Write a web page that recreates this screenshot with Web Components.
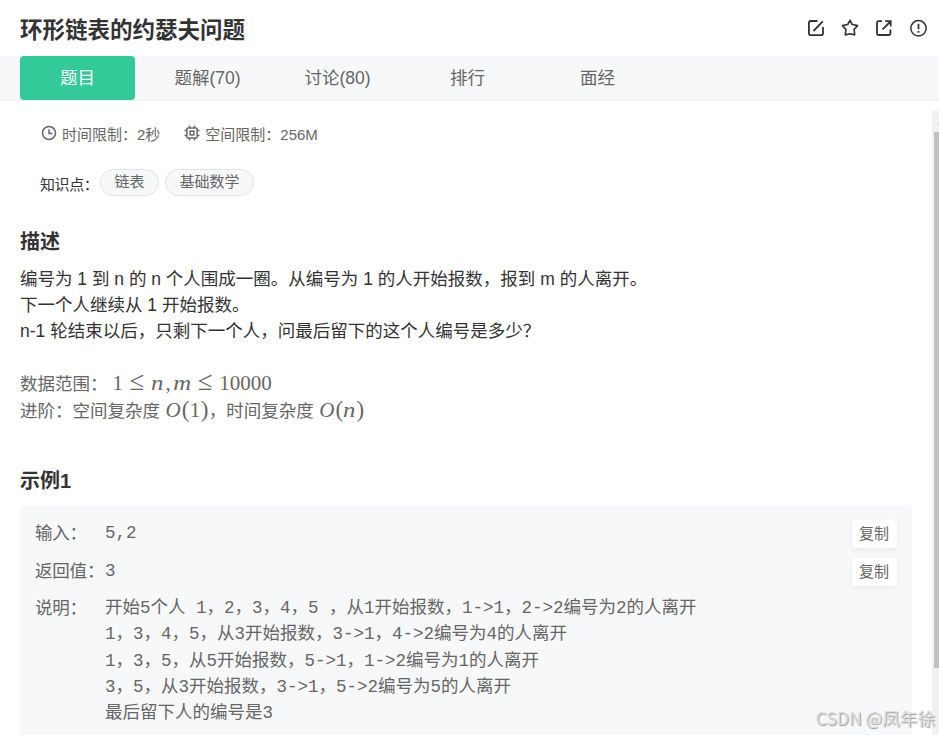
<!DOCTYPE html>
<html lang="zh-CN">
<head>
    <meta charset="UTF-8">
    <meta name="viewport" content="width=device-width, initial-scale=1.0">
    <title>环形链表的约瑟夫问题</title>
    <style>
        body {
            margin: 0;
            background: #fff;
            color: #666;
            font: 17.5px/26.25px "Liberation Sans", "Noto Sans CJK SC", sans-serif;
            overflow: hidden;
        }
    </style>
</head>
<body>
    <problem-page>
        <problem-header slot="header">环形链表的约瑟夫问题</problem-header>
        <tab-bar slot="tabs">
            <tab-item active>题目</tab-item>
            <tab-item>题解(70)</tab-item>
            <tab-item>讨论(80)</tab-item>
            <tab-item>排行</tab-item>
            <tab-item>面经</tab-item>
        </tab-bar>
        <limit-info></limit-info>
        <tag-list label="知识点：">
            <tag-pill>链表</tag-pill>
            <tag-pill>基础数学</tag-pill>
        </tag-list>
        <problem-description heading="描述"></problem-description>
        <example-box heading="示例1">
            <example-row label="输入：" copy>5,2</example-row>
            <example-row label="返回值：" copy>3</example-row>
            <example-row label="说明：">开始5个人 1，2，3，4，5 ，从1开始报数，1-&gt;1，2-&gt;2编号为2的人离开
1，3，4，5，从3开始报数，3-&gt;1，4-&gt;2编号为4的人离开
1，3，5，从5开始报数，5-&gt;1，1-&gt;2编号为1的人离开
3，5，从3开始报数，3-&gt;1，5-&gt;2编号为5的人离开
最后留下人的编号是3</example-row>
        </example-box>
        <water-mark slot="overlay">CSDN @凤年徐</water-mark>
    </problem-page>

    <script>
        // Small helper: registers an element with an open shadow root
        function define(name, render) {
            customElements.define(name, class extends HTMLElement {
                constructor() {
                    super();
                    this.attachShadow({mode: 'open'}).innerHTML = render(this);
                }
            });
        }

        define('problem-page', () => `
            <style>
                :host { display: flex; flex-direction: column; position: relative; width: 939px; height: 735px; overflow: hidden; }
                .body { display: flex; flex: 1; min-height: 0; margin-top: 10px; }
                main { flex: 1; min-width: 0; overflow: hidden; padding: 0 20px; }
            </style>
            <slot name="header"></slot>
            <slot name="tabs"></slot>
            <div class="body">
                <main><slot></slot></main>
                <scroll-bar></scroll-bar>
            </div>
            <slot name="overlay"></slot>
        `);

        define('problem-header', () => `
            <style>
                :host { display: flex; justify-content: space-between; align-items: center; height: 56px; box-sizing: border-box; padding: 2px 11px 0 20px; }
                h1 { margin: 3px 0 0; font-size: 22.5px; line-height: 34px; color: #333; font-weight: bold; }
                .icons { display: flex; gap: 14px; }
                svg { width: 20px; height: 20px; fill: none; stroke: #333; stroke-width: 1.8; margin-top: -2px; }
            </style>
            <h1><slot></slot></h1>
            <div class="icons">
                <svg viewBox="0 0 20 20"><path d="M11.5 3H4.8Q2.9 3 2.9 4.9V15.2Q2.9 17.1 4.8 17.1H15.1Q17 17.1 17 15.2V9M7.5 13 16.8 3.4"/></svg>
                <svg viewBox="0 0 20 20"><path stroke-width="1.6" stroke-linejoin="round" d="M10 2.3 12.3 6.5 17.6 7.6 14.1 11.4 14.7 16.9 10 15.8 5.3 16.9 5.9 11.4 2.4 7.6 7.7 6.5Z"/></svg>
                <svg viewBox="0 0 20 20"><path d="M8 3.2H4.8Q3 3.2 3 5V15.2Q3 17 4.8 17H14.6Q16.4 17 16.4 15.2V11.5M8.6 11.4 16 4M11.2 3.1H16.7V8.6"/></svg>
                <svg viewBox="0 0 20 20"><circle cx="10.5" cy="10.3" r="7.7" stroke-width="1.5"/><path d="M10.5 5.8V11.3M10.5 12.9V14.7"/></svg>
            </div>
        `);

        define('tab-bar', () => `
            <style>
                :host { display: flex; gap: 15px; height: 45px; box-sizing: border-box; padding-left: 20px; background: #f7f8fa; border-bottom: 1px solid #eff0f2; }
            </style>
            <slot></slot>
        `);

        define('tab-item', () => `
            <style>
                :host { display: block; width: 115px; height: 44px; line-height: 44px; text-align: center; border-radius: 4px; }
                :host([active]) { background: #32ca99; color: #fff; }
            </style>
            <slot></slot>
        `);

        define('limit-info', () => `
            <style>
                :host { display: flex; gap: 24px; height: 48px; align-items: center; padding-left: 21px; font-size: 15px; }
                span { display: flex; align-items: center; gap: 5px; }
                svg { width: 16px; height: 16px; fill: none; stroke: #666; stroke-width: 1.5; margin-bottom: 4px; }
            </style>
            <span>
                <svg viewBox="0 0 16 16"><circle cx="8" cy="8" r="6.5"/><path d="M8 4.2V8.5H11.5"/></svg>
                时间限制：2秒
            </span>
            <span>
                <svg viewBox="0 0 16 16"><rect x="2.9" y="2.9" width="10.2" height="10.2" rx="1"/><rect x="6.1" y="6.1" width="3.8" height="3.8"/><path stroke-width="1.3" d="M5.5 .5V3M10.5 .5V3M5.5 13V15.5M10.5 13V15.5M.5 5.5H3M.5 10.5H3M13 5.5H15.5M13 10.5H15.5"/></svg>
                空间限制：256M
            </span>
        `);

        define('tag-list', el => `
            <style>
                :host { display: flex; gap: 6px; margin-top: 10px; padding-left: 20px; font-size: 15px; color: #333; }
                label { width: 54px; line-height: 31px; white-space: nowrap; letter-spacing: -.4px; }
            </style>
            <label>${el.getAttribute('label')}</label>
            <slot></slot>
        `);

        define('tag-pill', () => `
            <style>
                :host { display: block; height: 27px; box-sizing: border-box; padding: 0 13.5px; border: 1px solid #e1e3e5; border-radius: 14px; background: #f7f8fa; color: #666; line-height: 24px; }
            </style>
            <slot></slot>
        `);

        define('problem-description', el => `
            <style>
                :host { display: block; }
                h2 { margin: 27px 0 9px; font-size: 20px; line-height: 30px; color: #333; }
                p { margin: 0; white-space: nowrap; line-height: 26px; }
                .text { color: #333; }
                .range { margin-top: 27px; line-height: 27px; }
                .rel { width: 28px; font-size: 27px; }
                .n { transform: scaleX(1.18); }
            </style>
            <h2>${el.getAttribute('heading')}</h2>
            <p class="text">编号为 1 到 n 的 n 个人围成一圈。从编号为 1 的人开始报数，报到 m 的人离开。<br>下一个人继续从 1 开始报数。<br>n-1 轮结束以后，只剩下一个人，问最后留下的这个人编号是多少？</p>
            <p class="range">数据范围： <math-text><b>1</b><b class="rel">≤</b><i class="n">n</i><b style="width:9.3px">,</b><i class="n" style="width:18.5px">m</i><b class="rel">≤</b><b>10000</b></math-text><br>进阶：空间复杂度 <math-text><i style="width:16.5px">O</i><b class="p">(</b><b>1</b><b class="p">)</b></math-text>，时间复杂度 <math-text><i style="width:16.5px">O</i><b class="p">(</b><i class="n">n</i><b class="p">)</b></math-text></p>
        `);

        // Formula text: upright and italic symbols with set advances
        define('math-text', () => `
            <style>
                :host { display: inline-block; font-family: "Liberation Serif", serif; font-size: 21px; line-height: 20px; }
                ::slotted(b), ::slotted(i) { display: inline-block; font-weight: normal; text-align: center; }
                ::slotted(i) { width: 12.6px; }
                ::slotted(.p) { width: 8.4px; font-size: 23px; }
            </style>
            <slot></slot>
        `);

        define('example-box', el => `
            <style>
                :host { display: block; }
                h2 { margin: 41px 0 9px; font-size: 20px; line-height: 30px; color: #333; }
                .box { height: 300px; border-radius: 5px; background: #f7f8fa; padding: 15px 15px 0; }
            </style>
            <h2>${el.getAttribute('heading')}</h2>
            <div class="box"><slot></slot></div>
        `);

        define('example-row', el => `
            <style>
                :host { display: flex; align-items: flex-start; height: 26.25px; margin-bottom: 11.25px; }
                label { width: 70px; white-space: nowrap; letter-spacing: -.2px; }
                pre { flex: 1; margin: 0; font-family: "Liberation Mono", "Noto Sans CJK SC", monospace; }
                button { width: 45px; height: 28px; padding: 0 1px 2px 0; border: 0; border-radius: 3px; background: #fff; box-shadow: 0 2px 5px rgba(0,0,0,.06); color: #666; font: 15px/26px "Noto Sans CJK SC", sans-serif; }
            </style>
            <label>${el.getAttribute('label')}</label>
            <pre><slot></slot></pre>
            ${el.hasAttribute('copy') ? '<button>复制</button>' : ''}
        `);

        define('scroll-bar', () => `
            <style>
                :host { display: block; width: 7px; box-sizing: border-box; background: #f1f1f1; padding-left: 2px; }
                svg { display: block; width: 5px; height: 21px; }
                .thumb { height: 536px; background: #c1c1c1; }
            </style>
            <svg viewBox="0 0 5 21"><path fill="#8a8a8a" d="M4 14 8 10V14Z"/></svg>
            <div class="thumb"></div>
        `);

        define('water-mark', () => `
            <style>
                :host { position: absolute; right: 4px; bottom: 5px; font: 17.6px/24px "Noto Sans CJK SC", sans-serif; color: #dcdddd; text-shadow: 1px 1px 1px #999; white-space: nowrap; }
            </style>
            <slot></slot>
        `);
    </script>
</body>
</html>
